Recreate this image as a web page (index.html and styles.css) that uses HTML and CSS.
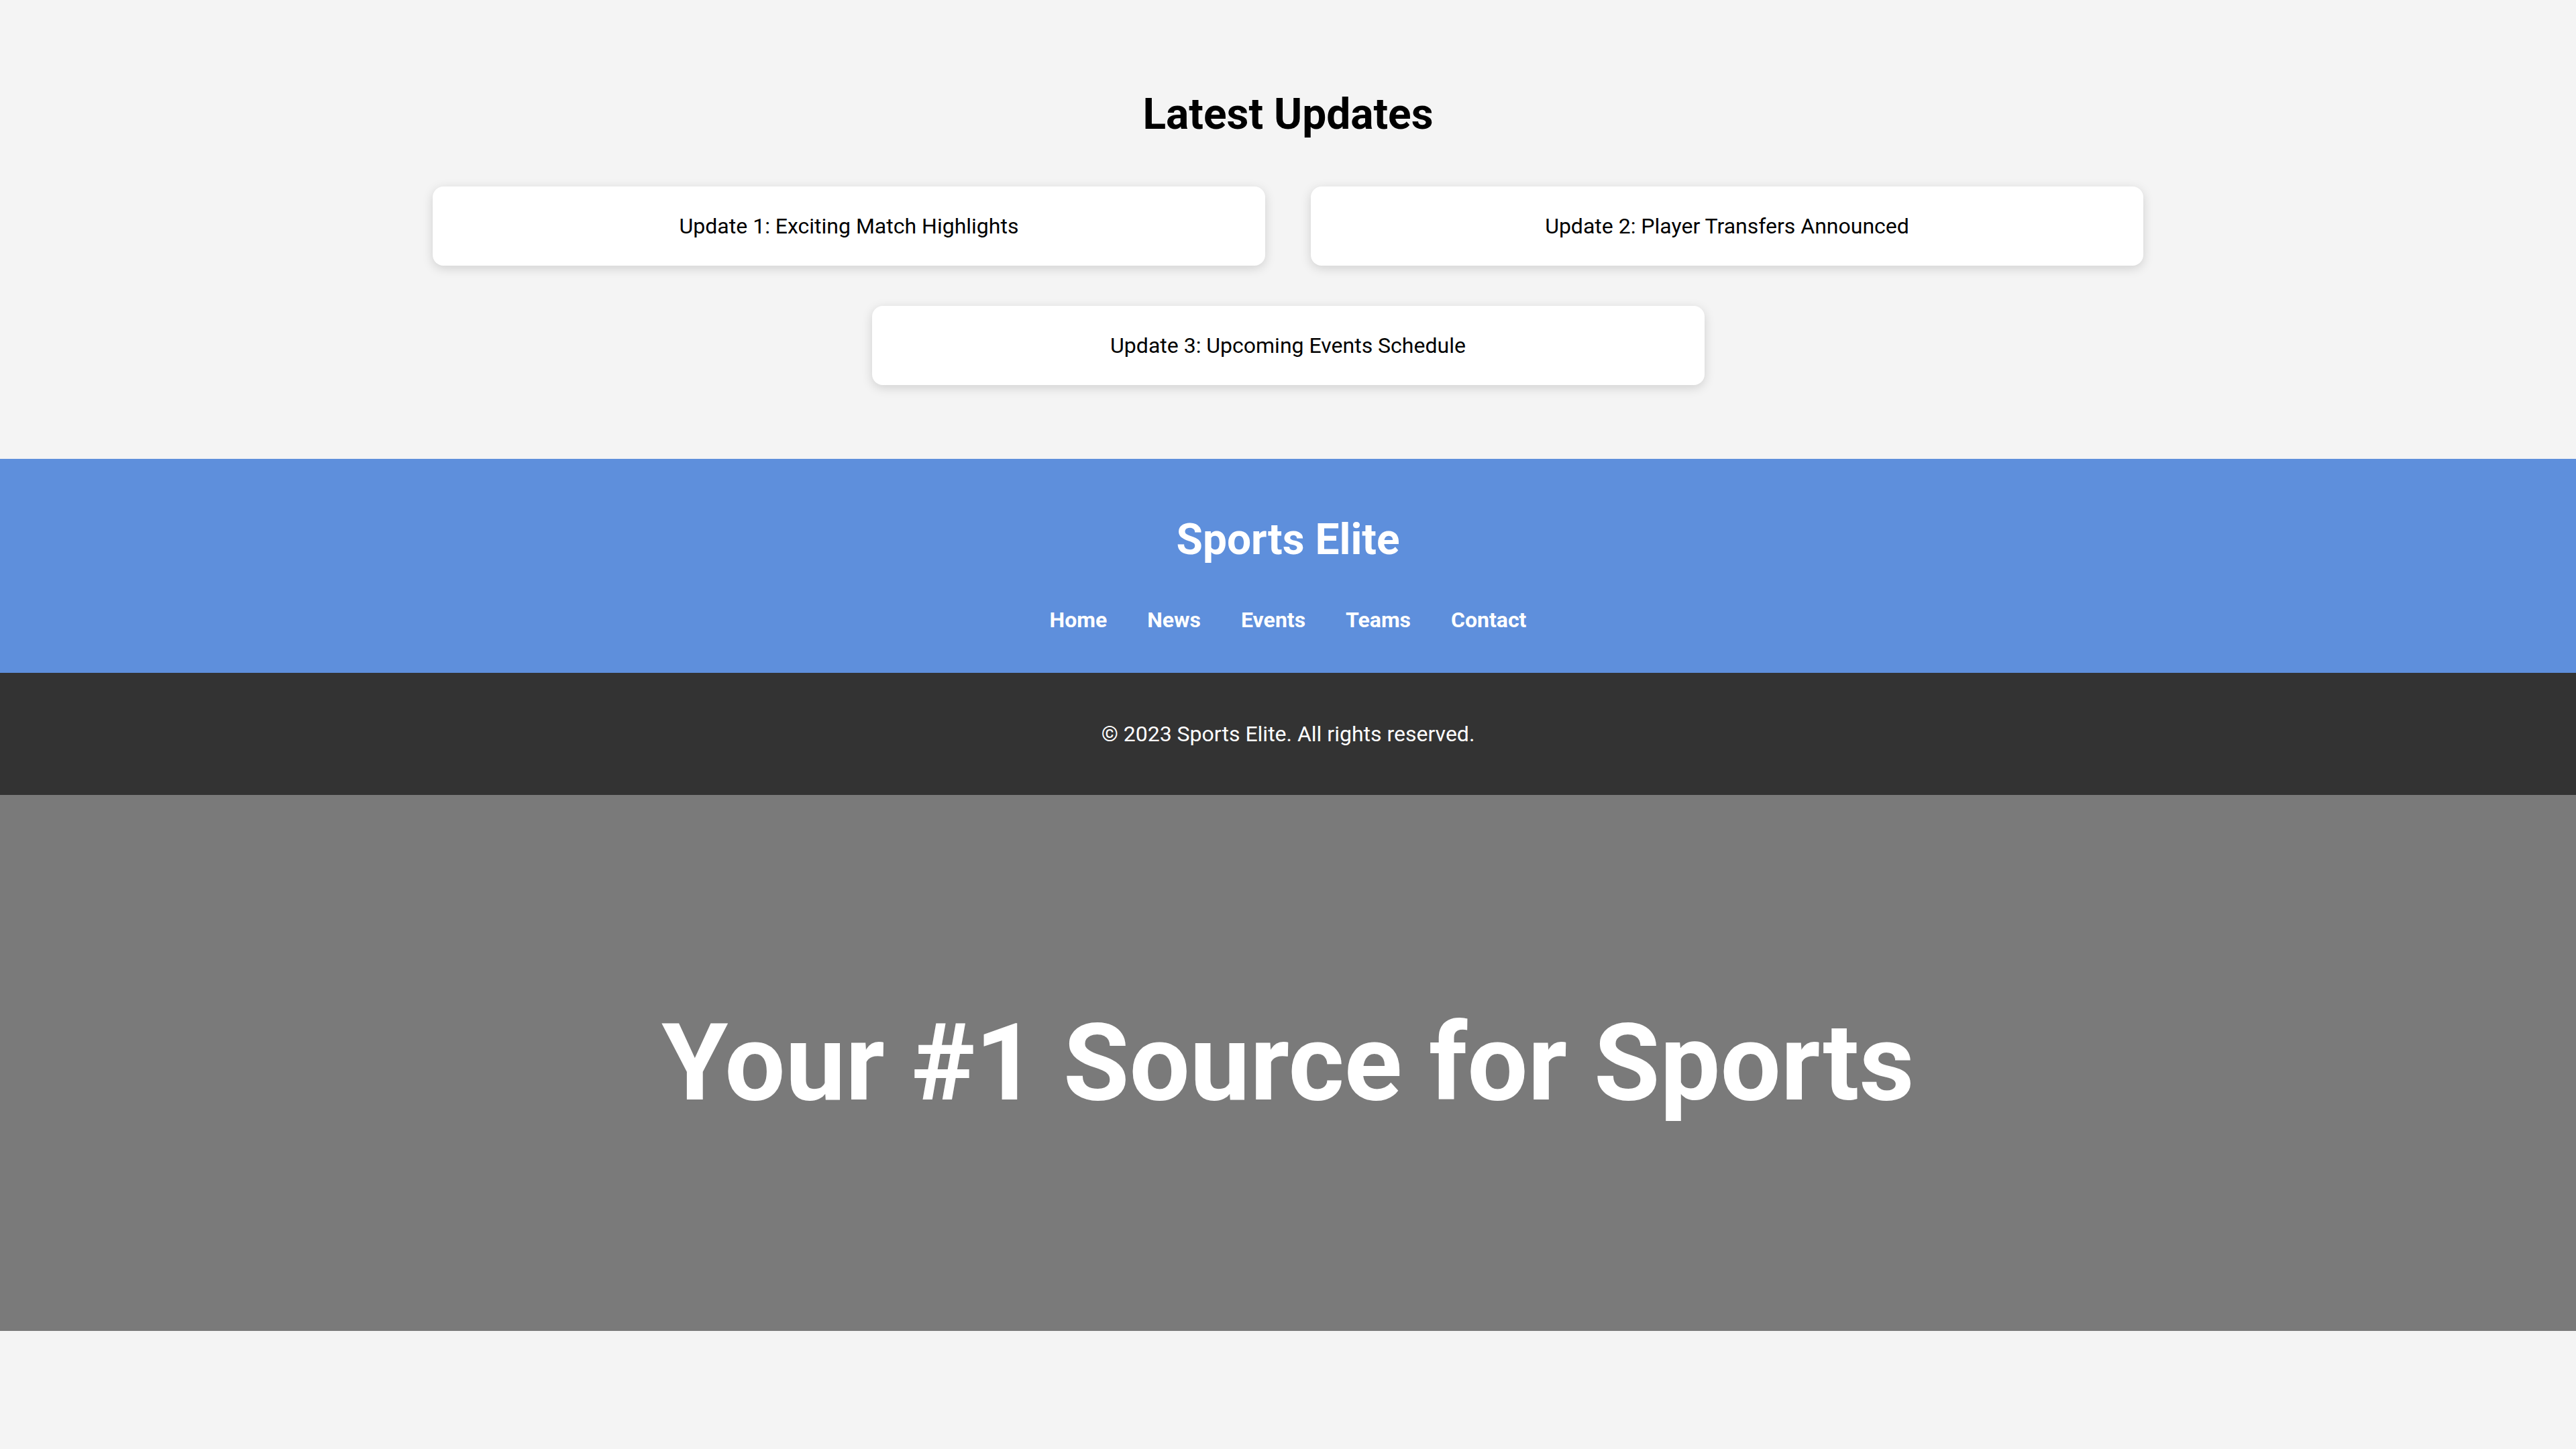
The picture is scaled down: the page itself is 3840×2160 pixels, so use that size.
FILE: index.html
```html
<!DOCTYPE html>
<html lang="en">
<head>
<meta charset="utf-8">
<title>Sports Elite</title>
<link rel="stylesheet" href="styles.css">
</head>
<body>
<section class="updates">
  <h2 class="section-title">Latest Updates</h2>
  <div class="update-list">
    <div class="update-card">Update 1: Exciting Match Highlights</div>
    <div class="update-card">Update 2: Player Transfers Announced</div>
    <div class="update-card">Update 3: Upcoming Events Schedule</div>
  </div>
</section>
<header class="site-header">
  <h1 class="brand">Sports Elite</h1>
  <nav class="main-nav">
    <a href="#">Home</a>
    <a href="#">News</a>
    <a href="#">Events</a>
    <a href="#">Teams</a>
    <a href="#">Contact</a>
  </nav>
</header>
<footer class="site-footer">
  <p>&copy; 2023 Sports Elite. All rights reserved.</p>
</footer>
<section class="hero">
  <h1 class="hero-title">Your #1 Source for Sports</h1>
</section>
</body>
</html>
```

FILE: styles.css
```css
* {
  box-sizing: border-box;
}

html, body {
  margin: 0;
  padding: 0;
}

body {
  background: #f4f4f4;
  font-family: Roboto, "Liberation Sans", Arial, sans-serif;
  font-size: 32px;
  color: #000;
}

.updates {
  padding: 133px 0 110px;
}

.section-title {
  margin: 0 0 70px;
  font-size: 64px;
  font-weight: 700;
  line-height: normal;
  text-align: center;
}

.update-list {
  display: flex;
  flex-wrap: wrap;
  justify-content: center;
  column-gap: 68px;
  row-gap: 60px;
}

.update-card {
  flex: 0 0 1241px;
  background: #fff;
  border-radius: 16px;
  box-shadow: 0 4px 16px rgba(0, 0, 0, 0.15);
  padding: 40px;
  text-align: center;
  line-height: normal;
}

.site-header {
  background: #5e8fdc;
  color: #fff;
  text-align: center;
  padding: 40px 0;
}

.brand {
  margin: 43px 0 0;
  font-size: 64px;
  font-weight: 700;
  line-height: normal;
}

.main-nav {
  display: flex;
  justify-content: center;
  gap: 60px;
  padding: 63px 0 20px;
}

.main-nav a {
  color: #fff;
  text-decoration: none;
  font-weight: 700;
  line-height: normal;
}

.site-footer {
  background: #333;
  color: #fff;
  text-align: center;
  padding: 40px 0;
}

.site-footer p {
  margin: 32px 0;
  line-height: normal;
}

.hero {
  background: #7a7a7a;
  height: 799px;
  display: flex;
  align-items: center;
  justify-content: center;
}

.hero-title {
  margin: 0;
  color: #fff;
  font-size: 160px;
  font-weight: 700;
  line-height: normal;
}
```
